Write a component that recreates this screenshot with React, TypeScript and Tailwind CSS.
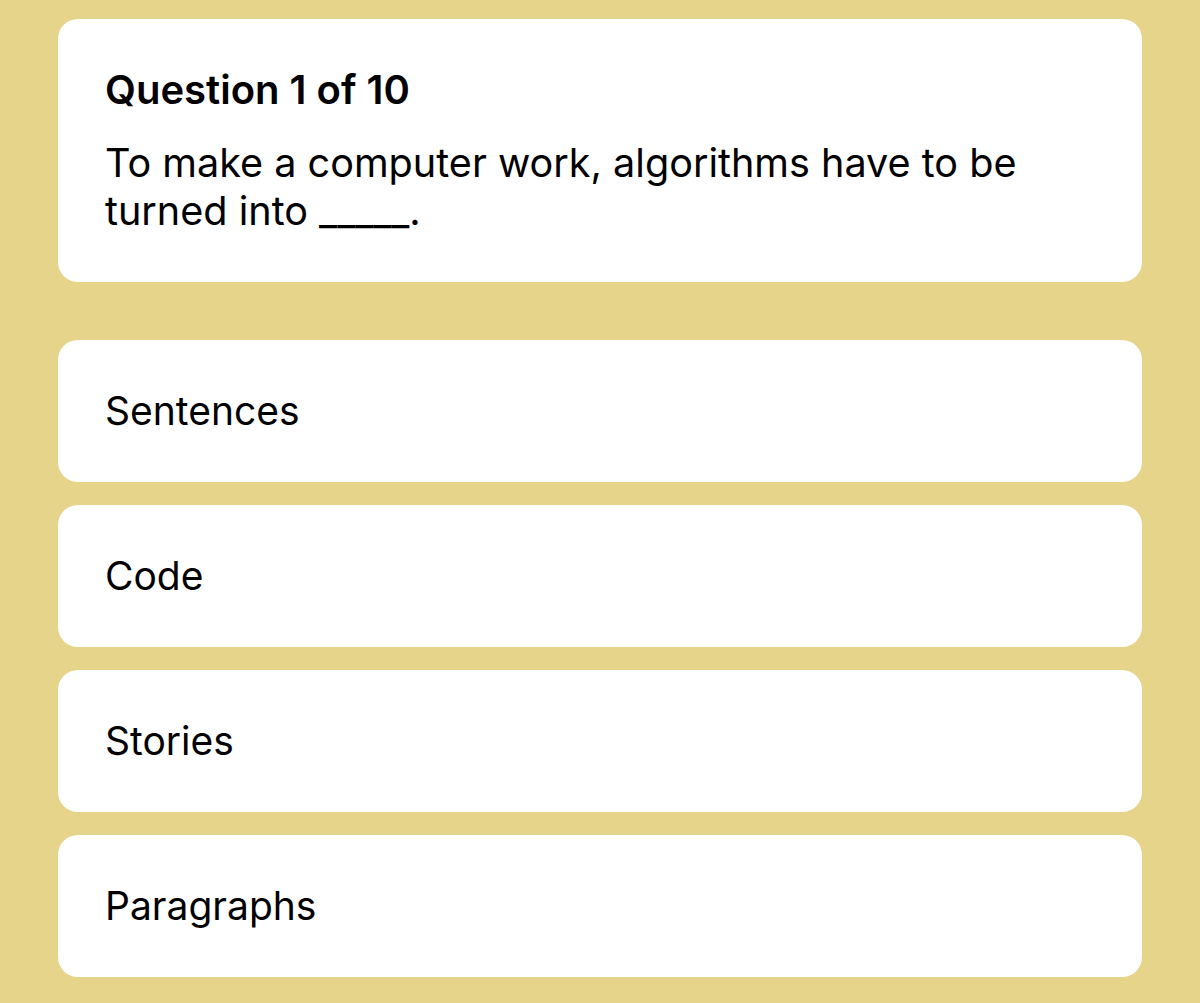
const options = ['Sentences', 'Code', 'Stories', 'Paragraphs'];

export default function App() {
  return (
    <div
      className="min-h-[1003px] w-full bg-[#e5d48a] px-[58px] pt-[19px] pb-[26px] text-black"
      style={{ fontFamily: 'Inter, "Noto Sans", sans-serif' }}
    >
      <div className="flex h-[263px] flex-col rounded-[20px] bg-white px-[47px] pt-[47px]">
        <h1 className="text-[40px] font-semibold leading-[48px]">Question 1 of 10</h1>
        <p className="mt-[25px] text-[39.6px] leading-[48px]">
          To make a computer work, algorithms have to be
          <br />
          turned into _____.
        </p>
      </div>

      <div className="mt-[58px] flex flex-col gap-[23px]">
        {options.map((opt) => (
          <button
            key={opt}
            className="flex h-[142px] items-center rounded-[20px] bg-white px-[47px] text-left text-[39px]"
          >
            {opt}
          </button>
        ))}
      </div>
    </div>
  );
}
